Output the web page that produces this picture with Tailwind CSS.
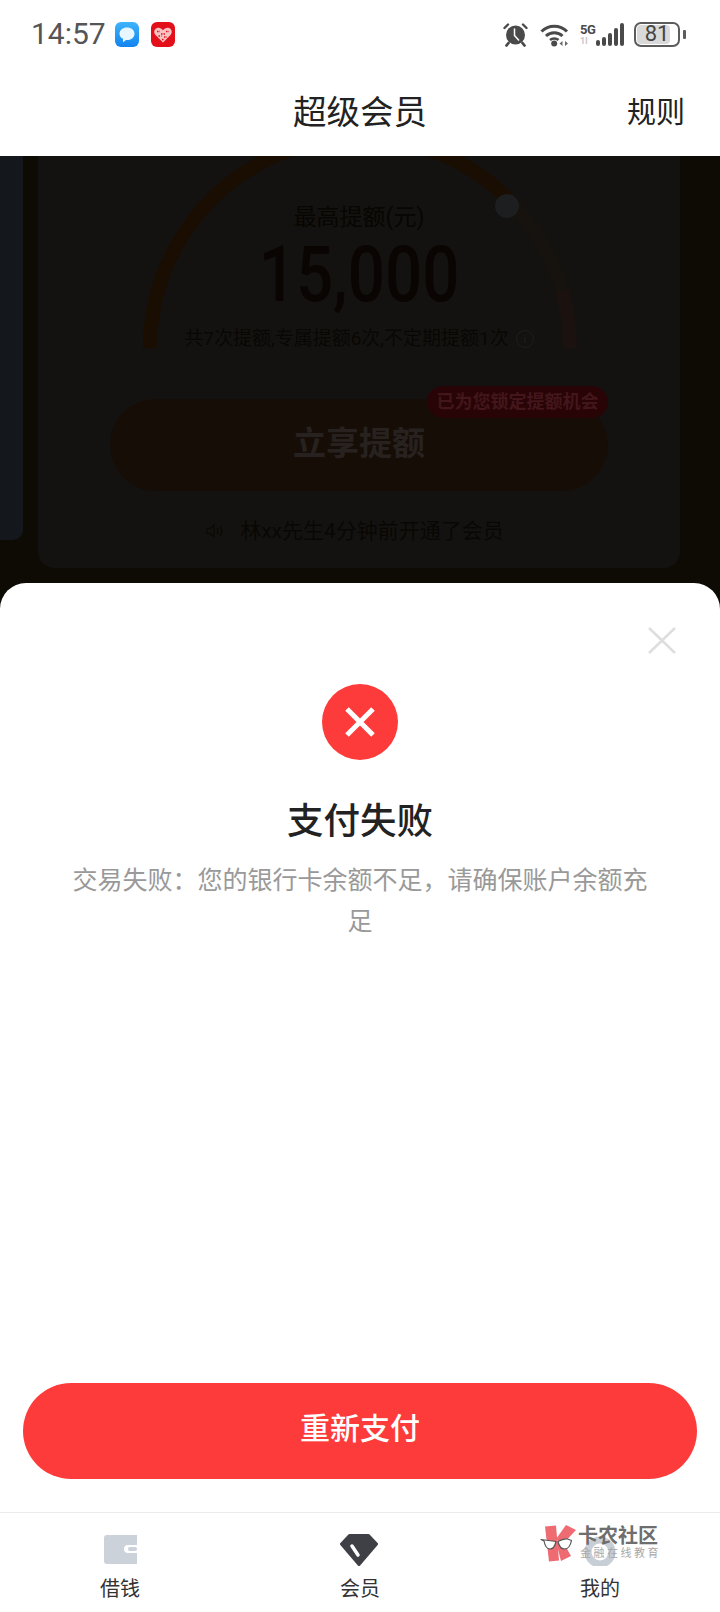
<!DOCTYPE html>
<html lang="zh-CN">
<head>
    <meta charset="UTF-8">
    <meta name="viewport" content="width=device-width, initial-scale=1.0">
    <title>超级会员</title>
    <script src="https://cdn.jsdelivr.net/npm/@tailwindcss/browser@4"></script>
</head>
<body class="bg-white overflow-hidden">
<div class="relative w-[720px] h-[1612px] flex flex-col overflow-hidden bg-white font-['Roboto','Noto_Sans_CJK_SC',sans-serif]">

    <!-- status bar -->
    <div class="h-[68px] shrink-0 flex items-center pl-[31px] pr-[34px]">
        <span class="text-[30px] leading-none text-[#555] w-[74px]">14:57</span>
        <svg class="ml-[10px]" width="24" height="25" viewBox="0 0 24 25">
            <defs>
                <linearGradient id="msgBlue" x1="0" y1="0" x2="0" y2="1">
                    <stop offset="0" stop-color="#3fb4fb"/>
                    <stop offset="1" stop-color="#1283ee"/>
                </linearGradient>
            </defs>
            <rect width="24" height="25" rx="6" fill="url(#msgBlue)"/>
            <path d="M12 5.500c4.400 0 7.500 2.700 7.500 6.200S16.400 18 12.500 18c-.5 0-1 0-1.500-.1L8 20.300v-3.500c-2.200-1.100-3.500-2.900-3.500-5.100C4.500 8.200 7.600 5.500 12 5.500z" fill="#e8f6ff"/>
        </svg>
        <svg class="ml-[12px]" width="24" height="25" viewBox="0 0 24 25">
            <rect width="24" height="25" rx="6" fill="#e3101a"/>
            <path d="M12 20.500 4.500 13c-2-2.200-1.500-5.500 1-6.700 2.300-1 4.800-.2 6.500 2 1.700-2.200 4.200-3 6.500-2 2.500 1.200 3 4.500 1 6.700z" fill="#f7c4c6"/>
            <path d="M6 9.500h3M10 12h4M15 9.500h3M7.500 14h3M13 15h3M11 17.500h2" stroke="#e3101a" stroke-width="1.300" stroke-dasharray="1.500 1"/>
        </svg>
        <div class="ml-auto flex items-center">
            <!-- alarm -->
            <svg width="25" height="25" viewBox="0 0 25 25">
                <circle cx="12.500" cy="13" r="9.500" fill="#4a4a4a"/>
                <path d="M11.500 6.500v7l4.500 5" stroke="#fff" stroke-width="1.500" fill="none"/>
                <path d="M1.500 6 5 2.500M23.500 6 20 2.500" stroke="#4a4a4a" stroke-width="2.400" stroke-linecap="round"/>
                <path d="M5.500 21l-2 2.500M19.500 21l2 2.500" stroke="#4a4a4a" stroke-width="2.800" stroke-linecap="round"/>
            </svg>
            <!-- wifi -->
            <svg class="ml-[12px]" width="31" height="25" viewBox="0 0 31 25">
                <path d="M1.500 9.500C8.500 2.500 20 2.500 27 9.500" stroke="#4a4a4a" stroke-width="3" fill="none"/>
                <path d="M6 14c4.500-4.300 12-4.300 16.500 0" stroke="#4a4a4a" stroke-width="3" fill="none"/>
                <path d="M10 18c2.300-2 6.200-2 8.500 0" stroke="#4a4a4a" stroke-width="2.600" fill="none"/>
                <circle cx="14.200" cy="21.500" r="3" fill="#4a4a4a"/>
                <path d="M22.500 19v5l-3-2.500zM25 19v5l3-2.500z" fill="#6a6a6a"/>
            </svg>
            <!-- 5G + signal -->
            <div class="ml-[9px] w-[16px] flex flex-col items-start">
                <span class="text-[13px] leading-[15px] font-bold text-[#4a4a4a] tracking-[-0.5px]">5G</span>
                <span class="text-[9px] leading-[9px] font-bold text-[#c8c8c8]">1l</span>
            </div>
            <div class="h-[25px] flex items-end gap-[2px] pb-[1px]">
                <div class="w-[4px] h-[6px] rounded-[2px] bg-[#4a4a4a]"></div>
                <div class="w-[4px] h-[9px] rounded-[2px] bg-[#4a4a4a]"></div>
                <div class="w-[4px] h-[13px] rounded-[2px] bg-[#4a4a4a]"></div>
                <div class="w-[4px] h-[18px] rounded-[2px] bg-[#4a4a4a]"></div>
                <div class="w-[4px] h-[23px] rounded-[2px] bg-[#4a4a4a]"></div>
            </div>
            <!-- battery -->
            <div class="ml-[10px] w-[46px] h-[25px] rounded-[7px] border-2 border-[#5c5c5c] p-[1px] relative">
                <div class="w-[33px] h-full rounded-[4px] bg-[#d9d9d9]"></div>
                <span class="absolute inset-0 flex items-center justify-center text-[22px] leading-none text-[#444]">81</span>
            </div>
            <div class="ml-[3px] w-[3px] h-[9px] rounded-[1px] bg-[#5c5c5c]"></div>
        </div>
    </div>

    <!-- header -->
    <div class="h-[88px] shrink-0 grid grid-cols-[1fr_auto_1fr] items-center px-[35px] pt-[2px]">
        <div></div>
        <h1 class="text-[33.500px] leading-[44px] text-[#222]">超级会员</h1>
        <div class="text-right text-[29px] leading-[40px] text-[#222]">规则</div>
    </div>

    <!-- dimmed page + result sheet -->
    <div class="flex-1 min-h-0 flex flex-col bg-[#0e0a04]">
        <div class="h-[427px] shrink-0 flex items-start">
            <div class="w-[23px] h-[384px] rounded-br-[10px] bg-[#14181d]"></div>
            <div class="relative ml-[15px] w-[642px] h-[412px] rounded-b-[16px] bg-[#141210] overflow-hidden">
                <!-- gauge -->
                <svg class="absolute left-0 top-0" width="642" height="212" viewBox="0 0 642 212">
                    <path d="M112 192A210 210 0 0 1 469 42" stroke="#1a0e02" stroke-width="14" fill="none"/>
                    <path d="M469 42A210 210 0 0 1 532 192" stroke="#16120e" stroke-width="14" fill="none"/>
                    <path d="M524 135A210 210 0 0 1 532 192" stroke="#1b1210" stroke-width="14" fill="none"/>
                    <circle cx="469" cy="50" r="12" fill="#1c1e20"/>
                </svg>
                <div class="relative pt-[48px] flex flex-col items-center">
                    <div class="text-[23px] leading-[28px] text-[#080502]">最高提额(元)</div>
                    <div class="mt-[5px] text-[77px] leading-[76px] font-medium text-[#0a0502] scale-x-[0.85]">15,000</div>
                    <div class="mt-[13px] flex items-center gap-[7px] text-[19px] leading-[26px] text-[#090704]">
                        <span>共7次提额,专属提额6次,不定期提额1次</span>
                        <span class="w-[18px] h-[18px] rounded-full border border-[#201e1a] flex items-center justify-center text-[11px] leading-none text-[#201e1a]">i</span>
                    </div>
                    <div class="relative mt-[47px] w-[498px] h-[92px] rounded-full bg-[#150d06] flex items-center justify-center">
                        <span class="-mt-[4px] text-[33px] leading-none font-bold text-[#272220]">立享提额</span>
                        <div class="absolute right-0 -top-[13px] w-[181px] h-[32px] rounded-full bg-[#280407] flex items-center justify-center text-[18px] leading-none font-bold text-[#43161b] whitespace-nowrap">已为您锁定提额机会</div>
                    </div>
                    <div class="mt-[26px] -ml-[8px] flex items-center gap-[16px] text-[21px] leading-[28px] text-[#090704]">
                        <svg width="18" height="18" viewBox="0 0 18 18" fill="none" stroke="#0c0a07" stroke-width="1.500">
                            <path d="M1 6.500h3L8 3v12l-4-3.500H1z"/>
                            <path d="M11 6c1.300 1.800 1.300 4.200 0 6M14 4c2.300 3 2.300 7 0 10"/>
                        </svg>
                        <span>林xx先生4分钟前开通了会员</span>
                    </div>
                </div>
            </div>
        </div>

        <div class="flex-1 min-h-0 flex flex-col rounded-t-[26px] bg-white">
            <div class="pt-[44px] pr-[44px] flex justify-end">
                <svg width="28" height="27" viewBox="0 0 28 27" stroke="#dedede" stroke-width="2.500">
                    <path d="M1 1l26 25M27 1 1 26"/>
                </svg>
            </div>
            <div class="mt-[30px] self-center w-[76px] h-[76px] rounded-full bg-[#fe3b3b] flex items-center justify-center">
                <svg width="32" height="32" viewBox="0 0 32 32" stroke="#fff" stroke-width="5">
                    <path d="M3 3l26 26M29 3 3 29"/>
                </svg>
            </div>
            <h2 class="mt-[37px] text-center text-[36.500px] leading-[50px] font-medium text-[#222]">支付失败</h2>
            <p class="mt-[13px] px-[70px] text-center text-[25px] leading-[41px] text-[#999]">交易失败：您的银行卡余额不足，请确保账户余额充足</p>

            <button class="mt-auto mb-[33px] mx-[23px] h-[96px] rounded-full bg-[#fe3b3b] pb-[6px] text-white text-[30px] font-medium">重新支付</button>

            <!-- bottom nav -->
            <div class="h-[100px] shrink-0 border-t border-[#ececec] grid grid-cols-3 pt-[21px]">
                <div class="flex flex-col items-center">
                    <svg width="34" height="32" viewBox="0 0 34 32">
                        <path d="M4 1h30v10H25a4 4 0 0 0 0 8h9v11H4a3 3 0 0 1-3-3V4a3 3 0 0 1 3-3z" fill="#cbd2da"/>
                        <rect x="25" y="13" width="9" height="4" rx="2" fill="#cbd2da"/>
                    </svg>
                    <span class="mt-[9px] text-[20px] leading-[28px] text-[#333]">借钱</span>
                </div>
                <div class="flex flex-col items-center">
                    <svg class="mr-[3px]" width="38" height="32" viewBox="0 0 38 32">
                        <path d="M9.500 1.500H28.500L36.500 10 19 30.500 1.500 10z" fill="#3f3f46" stroke="#3f3f46" stroke-width="3" stroke-linejoin="round"/>
                        <path d="M12 12l6 9" stroke="#fff" stroke-width="3.500" stroke-linecap="round"/>
                    </svg>
                    <span class="mt-[9px] text-[20px] leading-[28px] text-[#333]">会员</span>
                </div>
                <div class="flex flex-col items-center">
                    <svg width="36" height="32" viewBox="0 0 36 32" fill="none">
                        <circle cx="18" cy="18" r="12" stroke="#c8ced5" stroke-width="7"/>
                    </svg>
                    <span class="mt-[9px] text-[20px] leading-[28px] text-[#333]">我的</span>
                </div>
            </div>
        </div>
    </div>

    <!-- watermark -->
    <div class="absolute left-[540px] top-[1525px] flex items-start">
        <svg width="37" height="37" viewBox="0 0 37 37">
            <path d="M5 1.500 16 .5l3 35-10 1z" fill="#ee6b72"/>
            <path d="M26 0l10 5-14 15-6-6z" fill="#ee6b72"/>
            <path d="M16 17l6-2 9 16-10 5z" fill="#ee6b72"/>
            <path d="M1 14.500 4 16c1 5 3 8 6 8s5-3 6-7.500zM18 16.500c1 4.500 3 7.500 6.500 7.500s6-3.500 7-8.500l-4-1.500c-3-.5-6 .5-9.500 2.500z" fill="#fff" stroke="#555" stroke-width="1.200" stroke-linejoin="round"/>
        </svg>
        <div class="ml-[1px] mt-[1px] flex flex-col">
            <span class="text-[20px] leading-[20px] font-bold text-[#6e6e6e] whitespace-nowrap">卡农社区</span>
            <span class="mt-[2px] ml-[2px] text-[11px] leading-[12px] tracking-[2.500px] text-[#a8a8a8] whitespace-nowrap">金融在线教育</span>
        </div>
    </div>
</div>
</body>
</html>
